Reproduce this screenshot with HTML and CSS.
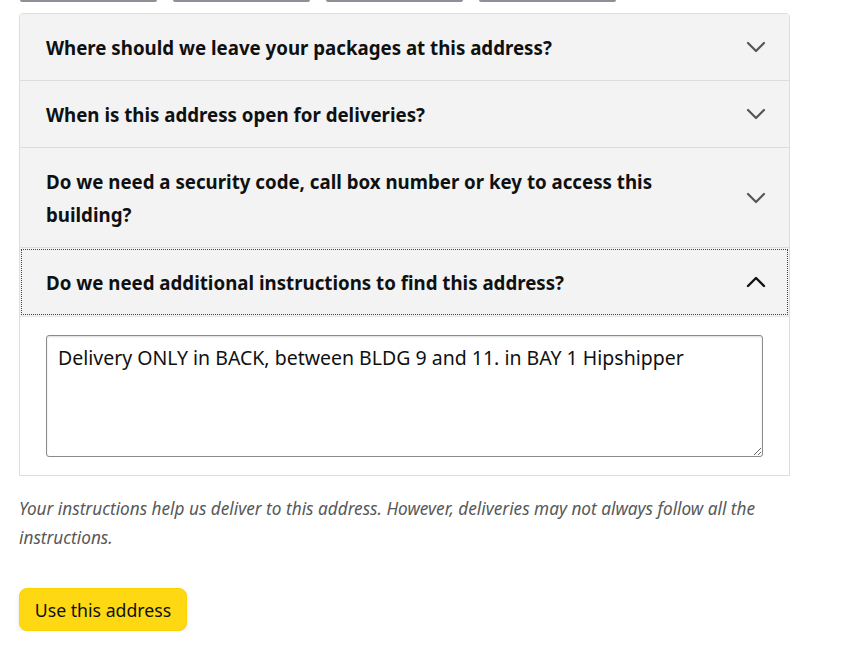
FILE: index.html
```html
<!DOCTYPE html>
<html>
<head>
<meta charset="utf-8">
<link rel="stylesheet" href="styles.css">
</head>
<body>
<div class="page">
  <div class="tabs">
    <div class="tab"></div><div class="tab"></div><div class="tab"></div><div class="tab"></div>
  </div>
  <div class="accordion">
    <div class="row">
      <div class="head">
        <span class="q">Where should we leave your packages at this address?</span>
        <svg class="chev" width="20" height="12" viewBox="0 0 20 12"><path d="M2 2 L10 10 L18 2" fill="none" stroke="#555" stroke-width="2.2" stroke-linecap="round" stroke-linejoin="round"/></svg>
      </div>
    </div>
    <div class="row">
      <div class="head">
        <span class="q">When is this address open for deliveries?</span>
        <svg class="chev" width="20" height="12" viewBox="0 0 20 12"><path d="M2 2 L10 10 L18 2" fill="none" stroke="#555" stroke-width="2.2" stroke-linecap="round" stroke-linejoin="round"/></svg>
      </div>
    </div>
    <div class="row">
      <div class="head">
        <span class="q">Do we need a security code, call box number or key to access this building?</span>
        <svg class="chev" width="20" height="12" viewBox="0 0 20 12"><path d="M2 2 L10 10 L18 2" fill="none" stroke="#555" stroke-width="2.2" stroke-linecap="round" stroke-linejoin="round"/></svg>
      </div>
    </div>
    <div class="row open">
      <div class="head focus">
        <span class="q">Do we need additional instructions to find this address?</span>
        <svg class="chev" width="20" height="12" viewBox="0 0 20 12"><path d="M2 10 L10 2 L18 10" fill="none" stroke="#111" stroke-width="2.4" stroke-linecap="round" stroke-linejoin="round"/></svg>
      </div>
      <div class="content">
        <textarea class="ta">Delivery ONLY in BACK, between BLDG 9 and 11. in BAY 1 Hipshipper</textarea>
      </div>
    </div>
  </div>
  <p class="note">Your instructions help us deliver to this address. However, deliveries may not always follow all the instructions.</p>
  <button class="btn">Use this address</button>
</div>
</body>
</html>
```
FILE: styles.css
```css
html, body { margin: 0; padding: 0; background: #fff; }
body { font-family: "Noto Sans", "Open Sans", Arial, sans-serif; color: #0f1111; }
.page { padding-left: 19px; width: 771px; }
.tabs { display: flex; gap: 16px; padding-left: 1px; height: 2px; }
.tab { width: 137px; height: 2px; background: #8d9096; border-radius: 0 0 2px 2px; }
.accordion { margin-top: 11px; border: 1px solid #dddddd; border-radius: 4px 4px 0 0; overflow: hidden; }
.row { border-bottom: 1px solid #dddddd; }
.row:last-child { border-bottom: none; }
.head { display: flex; align-items: center; justify-content: space-between; background: #f3f3f3; padding: 16.5px 23px 16.5px 26px; min-height: 33px; }
.q { font-weight: 700; font-size: 18.7px; line-height: 33px; max-width: 640px; }
.chev { flex: none; display: block; }
.head.focus { outline: 1px dotted #444; outline-offset: -2px; padding-top: 17.5px; padding-bottom: 17.5px; }
.content { background: #fff; padding: 18px 26px 18px 26px; border-top: 1px solid #e7e7e7; }
.ta { display: block; box-sizing: border-box; width: 717px; height: 122px; border: 1px solid #888c8c; border-radius: 3px; padding: 9px 11px; font-family: inherit; font-size: 19.5px; color: #0f1111; line-height: 26px; resize: both; margin: 0; box-shadow: 0 1px 2px rgba(15,17,17,.15) inset; }
.note { margin: 18px 0 0; font-style: italic; font-size: 17.2px; line-height: 29px; color: #565959; width: 760px; }
.btn { margin-top: 36px; width: 168px; height: 43px; background: #ffd814; border: 1px solid #fcd200; border-radius: 8px; font-family: inherit; font-size: 17.7px; color: #0f1111; box-shadow: 0 2px 5px rgba(213,217,217,.6); padding: 0; }
```
